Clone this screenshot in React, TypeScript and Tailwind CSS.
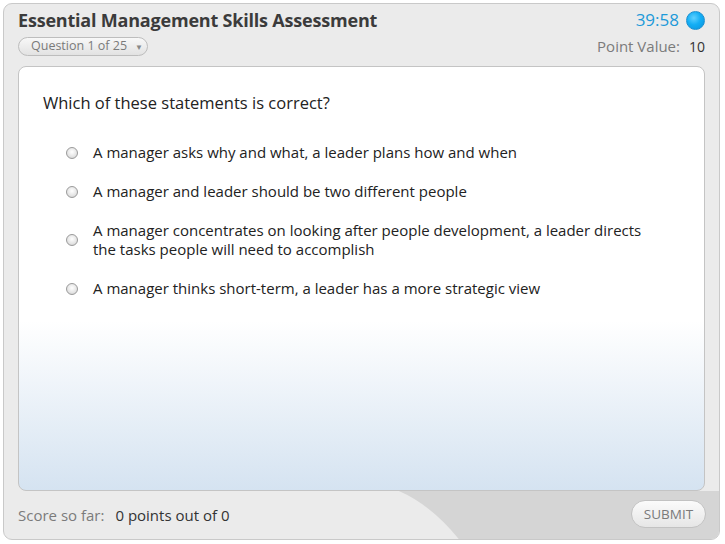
import React from "react";

const options = [
  "A manager asks why and what, a leader plans how and when",
  "A manager and leader should be two different people",
  "A manager concentrates on looking after people development, a leader directs the tasks people will need to accomplish",
  "A manager thinks short-term, a leader has a more strategic view",
];

export default function App() {
  return (
    <div
      className="w-[725px] h-[544px] bg-white p-[3px] pr-[5px] pb-[4px]"
      style={{ fontFamily: '"Open Sans", "Noto Sans", sans-serif' }}
    >
      <div className="relative flex h-full w-full flex-col overflow-hidden rounded-[9px] border border-[#c9c9c9] bg-[#ebebeb]">
        {/* header */}
        <div className="flex flex-col pl-[14px] pr-[14px] pt-[4px]">
          <div className="flex h-[24px] items-center justify-between">
            <div className="text-[18px] font-bold tracking-[-0.2px] text-[#3b3b3b]">
              Essential Management Skills Assessment
            </div>
            <div className="flex items-center gap-[7px]">
              <span className="text-[17px] text-[#1d9ad9]">39:58</span>
              <span className="h-[19px] w-[19px] rounded-full border border-[#1a8fd0] bg-[radial-gradient(circle_at_40%_35%,#5fd0ff_0%,#14aef5_45%,#0993dc_100%)]" />
            </div>
          </div>
          <div className="mt-[5px] flex h-[19px] items-center justify-between">
            <div className="flex h-[19px] w-[130px] items-center rounded-full border border-[#bdbdbd] bg-[linear-gradient(to_bottom,#f8f8f8,#e2e2e2)] pl-[12px] text-[12.5px] text-[#7a7a7a]">
              <span>Question 1 of 25</span>
              <span className="ml-[8px] text-[8px] text-[#888]">▼</span>
            </div>
            <div className="flex items-center gap-[9px] text-[15px]">
              <span className="text-[#7b7b7b]">Point Value:</span>
              <span className="text-[14px] text-[#333]">10</span>
            </div>
          </div>
        </div>

        {/* question panel */}
        <div className="mx-[14px] mt-[10px] h-[425px] rounded-[8px] border border-[#c4c4c4] bg-[linear-gradient(to_bottom,#ffffff_0%,#ffffff_60%,#d5e3f1_100%)] pl-[24px] pt-[26px]">
          <div className="text-[16.5px] leading-[20px] text-[#222]">
            Which of these statements is correct?
          </div>
          <div className="mt-[30px] flex flex-col gap-[20px] pl-[23px]">
            {options.map((o) => (
              <div key={o} className="flex items-center">
                <span className="h-[12px] w-[12px] shrink-0 rounded-full border border-[#9a9a9a] bg-[radial-gradient(circle_at_50%_40%,#ffffff_0%,#e4e4e4_60%,#c8c8c8_100%)]" />
                <span className="ml-[15px] w-[570px] text-[15px] leading-[19px] text-[#222]">
                  {o}
                </span>
              </div>
            ))}
          </div>
        </div>

        {/* footer */}
        <div className="relative flex flex-1 items-center justify-between pl-[14px] pr-[13px]">
          <svg
            className="absolute inset-0 h-full w-full"
            viewBox="0 0 717 49"
            preserveAspectRatio="none"
          >
            <path d="M396 0 Q 428 14 456 49 L717 49 L717 0 Z" fill="#d5d5d5" />
          </svg>
          <div className="relative flex items-center gap-[11px] text-[15px]">
            <span className="text-[#7b7b7b]">Score so far:</span>
            <span className="text-[#333]">0 points out of 0</span>
          </div>
          <div className="relative mb-[2px] flex h-[28px] w-[75px] items-center justify-center rounded-full border border-[#c2c2c2] bg-[linear-gradient(to_bottom,#fbfbfb,#e6e6e6)] text-[13.5px] text-[#7a7a7a]">
            SUBMIT
          </div>
        </div>
      </div>
    </div>
  );
}
